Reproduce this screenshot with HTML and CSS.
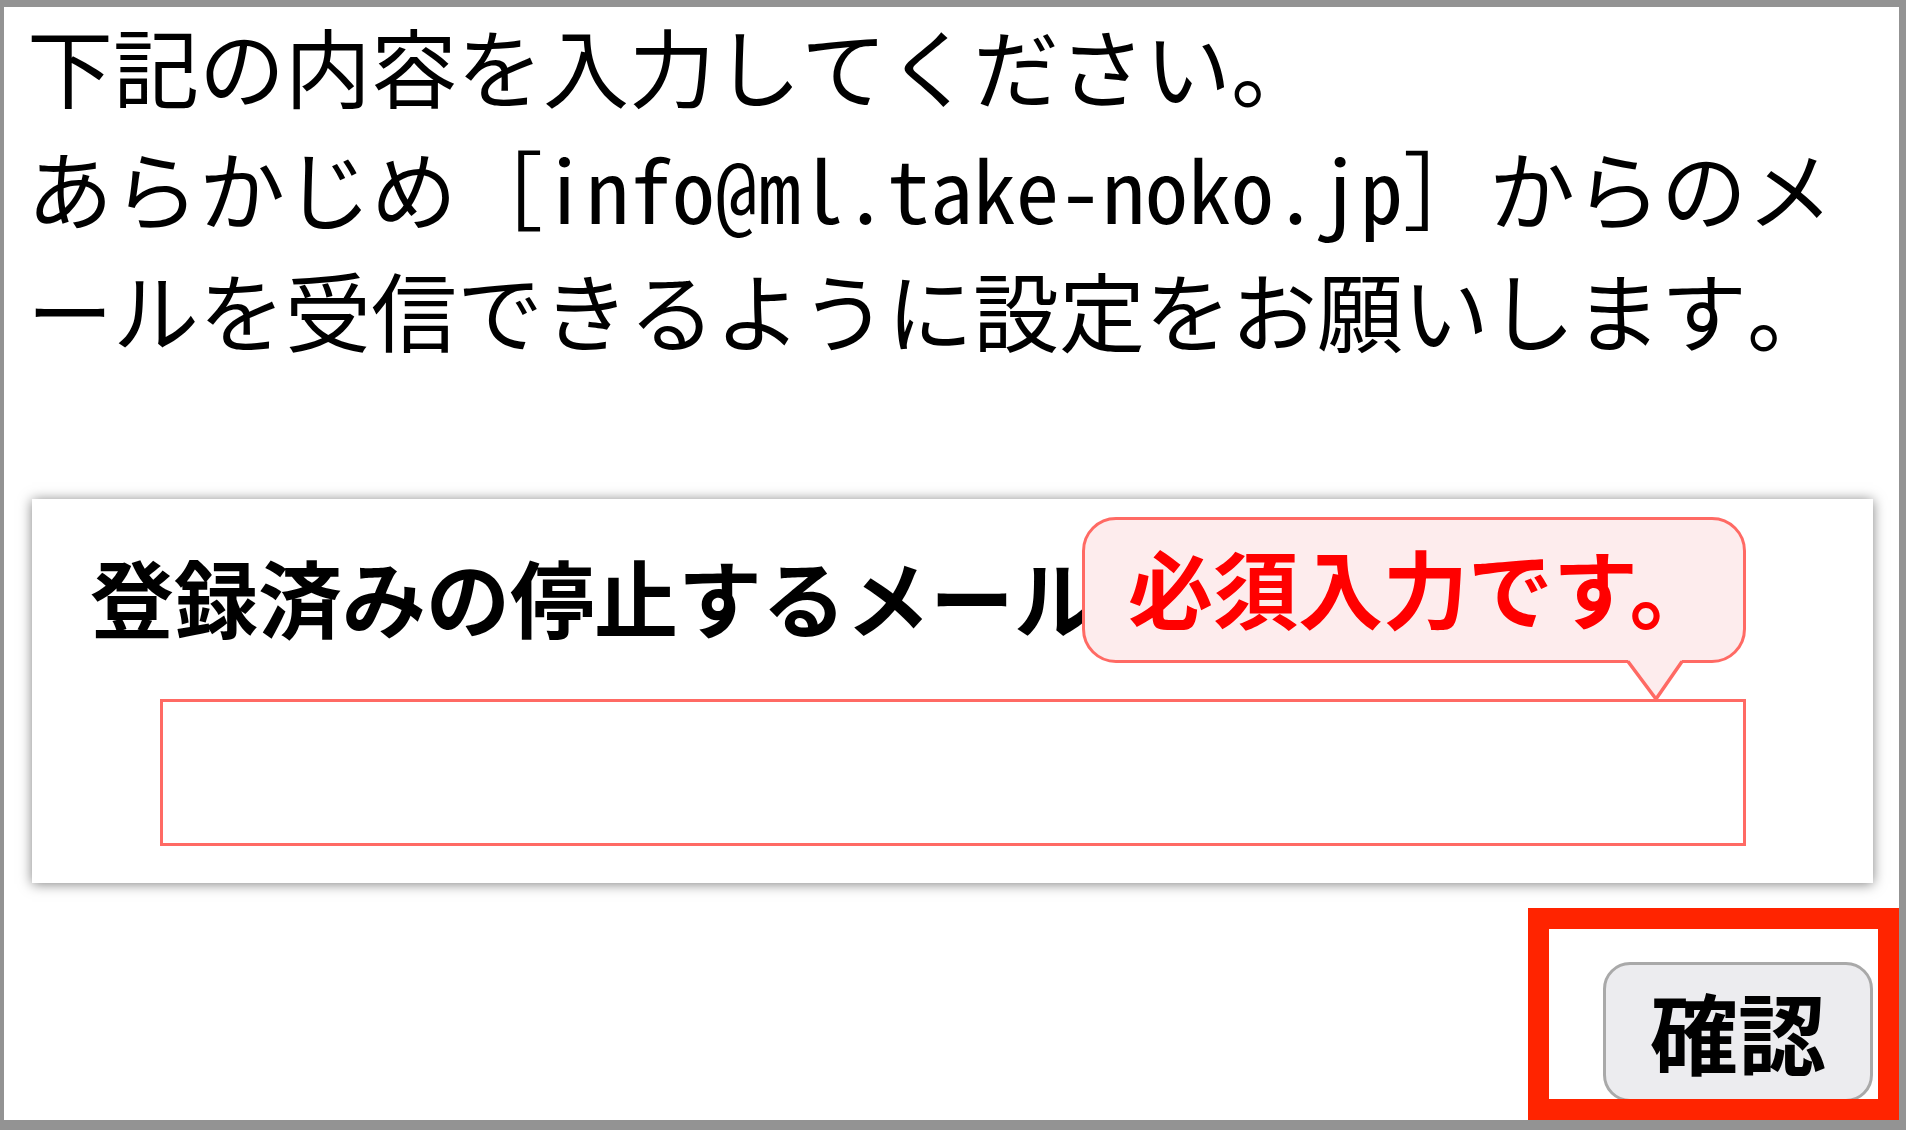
FILE: index.html
```html
<!DOCTYPE html>
<html lang="ja">
<head>
<meta charset="UTF-8">
<title>メール配信停止</title>
<link rel="stylesheet" href="styles.css">
</head>
<body>
<div class="screen">
  <p class="intro">下記の内容を入力してください。<br>あらかじめ［info@ml.take-noko.jp］からのメールを受信できるように設定をお願いします。</p>

  <form class="card" action="#">
    <label class="card-label" for="stopmail">登録済みの停止するメールアドレス</label>
    <div class="field">
      <input type="email" id="stopmail" name="stopmail" class="field-input">
    </div>
    <div class="tip" role="alert">必須入力です。
      <svg class="tip-arrow" width="60" height="42" viewBox="0 0 60 42">
        <polygon points="3,0 57,0 31,37" fill="#fdeced"/>
        <polyline points="3,1.5 31,39 57,1.5" fill="none" stroke="#ff6a64" stroke-width="3.5"/>
      </svg>
    </div>
  </form>

  <div class="actions">
    <button type="button" class="btn-confirm">確認</button>
  </div>

  <!-- highlight drawn over the confirm button -->
  <div class="mark"></div>
</div>
</body>
</html>
```

FILE: styles.css
```css
html, body {
  margin: 0;
  padding: 0;
  background: #fff;
}

body {
  font-family: "Noto Sans CJK JP", sans-serif;
  color: #000;
}

.screen {
  position: relative;
  box-sizing: border-box;
  width: 1906px;
  height: 1130px;
  overflow: hidden;
  border-style: solid;
  border-color: #939393;
  border-width: 7px 7px 10px 4px;
  background: #fff;
}

.intro {
  margin: -3px 0 0 0;
  padding-left: 23px;
  font-family: "Noto Sans Mono CJK JP", "Noto Sans CJK JP", sans-serif;
  font-size: 86px;
  line-height: 122px;
}

.card {
  position: relative;
  margin: 129px 26px 0 28px;
  padding: 36px 0 37px 0;
  background: #fff;
  box-shadow: 0 1px 12px rgba(0, 0, 0, 0.5);
}

.card-label {
  display: block;
  padding-left: 58px;
  font-size: 84px;
  font-weight: bold;
  line-height: 122px;
  white-space: nowrap;
}

.field {
  margin-top: 42px;
  padding: 0 127px 0 128px;
}

.field-input {
  display: block;
  box-sizing: border-box;
  width: 100%;
  height: 147px;
  margin: 0;
  border: 3px solid #ff6a64;
  background: #fff;
  outline: none;
}

/* validation bubble, lies over the end of the label */
.tip {
  position: absolute;
  top: 18px;
  left: 1050px;
  box-sizing: border-box;
  width: 664px;
  height: 146px;
  display: flex;
  align-items: center;
  padding: 0 0 10px 43px;
  border: 3px solid #ff6a64;
  border-radius: 34px;
  background: #fdeced;
  color: #ff0000;
  font-size: 85px;
  font-weight: bold;
  white-space: nowrap;
}

.tip-arrow {
  position: absolute;
  top: 100%;
  right: 58px;
}

.actions {
  display: flex;
  justify-content: flex-end;
  margin-top: 79px;
  padding-right: 26px;
}

.btn-confirm {
  box-sizing: border-box;
  width: 270px;
  height: 140px;
  padding: 0 0 4px 0;
  border: 3px solid #a9a9a9;
  border-radius: 27px;
  background: #ececef;
  color: #000;
  font-family: "Noto Sans CJK JP", sans-serif;
  font-size: 88px;
  font-weight: bold;
  line-height: 1;
}

.mark {
  position: absolute;
  right: 0;
  bottom: 0;
  box-sizing: border-box;
  width: 371px;
  height: 212px;
  border: 21px solid #ff2400;
}
```
